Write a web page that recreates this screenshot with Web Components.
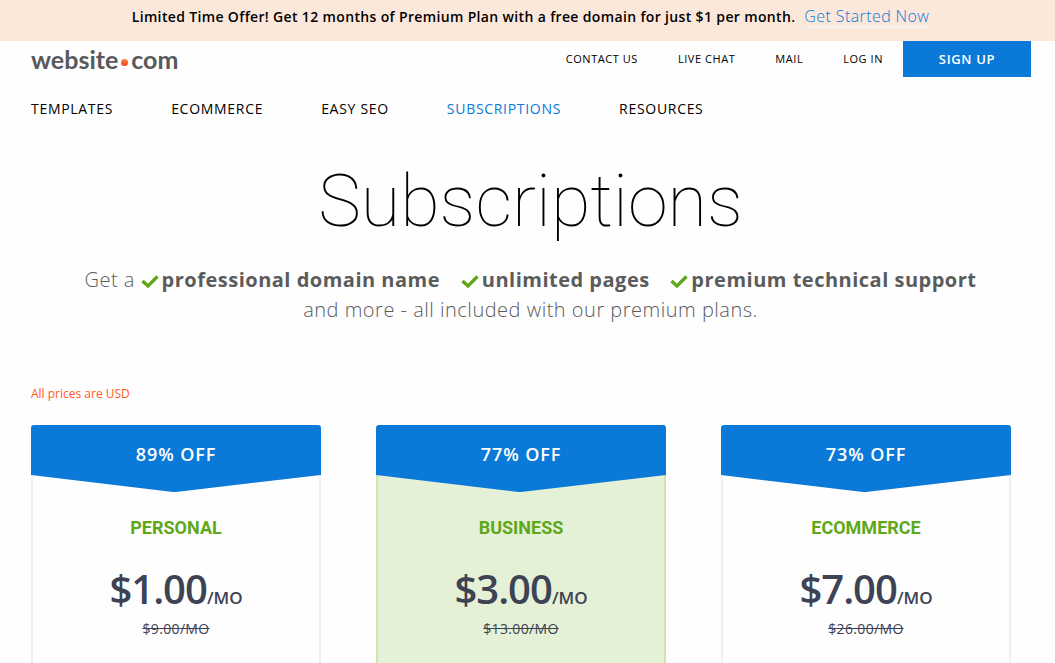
<!DOCTYPE html>
<html lang="en">
<head>
<meta charset="utf-8">
<meta name="viewport" content="width=device-width, initial-scale=1">
<title>Subscriptions | Website.com</title>
<style>
  html { background: #fefefe; scrollbar-width: none; }
  body {
    margin: 0;
    font-family: "Open Sans", "Noto Sans", sans-serif;
    color: #000;
    --blue: #0b79d8;
    --green: #5fa81a;
    --orange: #ff5a1f;
    --tracking: .025em;
    --tracking-wide: .05em;
  }
</style>
</head>
<body>
<subscription-page></subscription-page>

<script>
const define = (name, html) => customElements.define(name, class extends HTMLElement {
  constructor() {
    super();
    const template = document.createElement('template');
    template.innerHTML = html;
    this.attachShadow({ mode: 'open' }).append(template.content.cloneNode(true));
  }
});

define('offer-bar', `
  <style>
    :host { display: flex; justify-content: center; align-items: flex-start; gap: 9px;
      box-sizing: border-box; min-height: 41px; padding: 6px 24px 0 30px; background: #fbe8da; }
    strong, a { letter-spacing: var(--tracking); }
    strong { font-size: 14px; line-height: 22px; font-weight: 600; }
    a { font-size: 16px; line-height: 20px; font-weight: 300; color: var(--blue);
      text-decoration: none; border-bottom: 2px solid #f2f2f2; }
  </style>
  <strong>Limited Time Offer! Get 12 months of Premium Plan with a free domain for just $1 per month.</strong>
  <a href="#start">Get Started Now</a>
`);

define('site-logo', `
  <style>
    :host { display: block; }
    a { display: flex; align-items: center; gap: 3px; color: #58595b; text-decoration: none;
      font: 700 25px/36px Lato, sans-serif; }
    i { width: 7px; height: 7px; border-radius: 50%; background: linear-gradient(#f7873f, #f0441c); margin-top: 6px; }
  </style>
  <a href="#home"><span>website</span><i></i><span>com</span></a>
`);

define('nav-link', `
  <style>
    :host { display: block; }
    a { color: inherit; text-decoration: none; }
  </style>
  <a href="#"><slot></slot></a>
`);

define('site-header', `
  <style>
    :host { display: block; padding: 0 24px 0 31px; }
    .top { display: flex; justify-content: space-between; }
    .tools { display: flex; gap: 40px; font-size: 11px; line-height: 36px; letter-spacing: var(--tracking-wide); }
    .right { display: flex; gap: 20px; }
    button { width: 128px; height: 36px; border: 0; padding: 0; background: var(--blue); color: #fff;
      font: 600 13px/36px "Open Sans", sans-serif; letter-spacing: var(--tracking-wide); cursor: pointer; }
    .main { display: flex; gap: 58px; padding-top: 20px; font-size: 14px; line-height: 24px;
      letter-spacing: var(--tracking-wide); }
    .current { color: var(--blue); }
  </style>
  <div class="top">
    <site-logo></site-logo>
    <div class="right">
      <nav class="tools" aria-label="Account">
        <nav-link>CONTACT US</nav-link>
        <nav-link>LIVE CHAT</nav-link>
        <nav-link>MAIL</nav-link>
        <nav-link>LOG IN</nav-link>
      </nav>
      <button type="button">SIGN UP</button>
    </div>
  </div>
  <nav class="main" aria-label="Main">
    <nav-link>TEMPLATES</nav-link>
    <nav-link>ECOMMERCE</nav-link>
    <nav-link>EASY SEO</nav-link>
    <nav-link class="current">SUBSCRIPTIONS</nav-link>
    <nav-link>RESOURCES</nav-link>
  </nav>
`);

define('check-item', `
  <style>
    :host { display: inline; white-space: nowrap; }
    svg { width: 18px; height: 16px; vertical-align: -3px; margin-right: 3px; }
    path { fill: none; stroke: var(--green); stroke-width: 3.4; }
    strong { font-weight: 700; }
  </style>
  <svg viewBox="0 0 18 16" aria-hidden="true"><path d="M1.500 7 L7 12 L16.500 2.500"/></svg><strong><slot></slot></strong>
`);

define('page-intro', `
  <style>
    :host { display: block; padding: 41px 24px 0 30px; text-align: center; }
    h1 { margin: 0; font: 100 72px/80px Roboto, sans-serif; }
    p { margin: 23px 0 0; font-size: 20px; line-height: 30px; font-weight: 300; color: #5b5b5b;
      letter-spacing: var(--tracking); }
    check-item + check-item { margin-left: 15px; }
  </style>
  <h1>Subscriptions</h1>
  <p>Get a <check-item>professional domain name</check-item>
    <check-item>unlimited pages</check-item>
    <check-item>premium technical support</check-item><br>
    and more - all included with our premium plans.</p>
`);

define('plan-card', `
  <style>
    :host { display: block; box-sizing: border-box; text-align: center;
      --body: #fefefe; --edge: #eeeef5; }
    :host([featured]) { --body: #e5f1d6; --edge: #cde6ae; }
    .ribbon { position: relative; height: 67px; background: var(--blue); color: #fff; border-radius: 3px 3px 0 0;
      font-size: 18px; line-height: 58px; font-weight: 600; letter-spacing: var(--tracking-wide);
      clip-path: polygon(0 0, 100% 0, 100% 50px, 50% 100%, 49% 100%, 0 50px); }
    article { color: #3d4254; border: 2px solid var(--edge); border-top: 0; background: var(--body);
      margin-top: -17px; padding: 41px 0; }
    h2 { margin: 0; font: 700 18px/24px Roboto, sans-serif; color: var(--green); }
    .price { margin: 21px 0 0; font-size: 17px; line-height: 56px; font-weight: 600; }
    .price b { font-size: 40px; font-weight: 600; letter-spacing: -1px; }
    .old { margin: -8px 0 0; font-size: 14px; line-height: 22px; letter-spacing: var(--tracking); }
  </style>
  <div class="ribbon"><slot name="discount"></slot></div>
  <article>
    <h2><slot name="name"></slot></h2>
    <p class="price"><b><slot name="price"></slot></b><span>/MO</span></p>
    <p class="old"><s><slot name="old"></slot>/MO</s></p>
  </article>
`);

define('plan-list', `
  <style>
    :host { display: block; padding: 57px 44px 0 31px; }
    p { margin: 0; font-size: 12px; line-height: 24px; color: var(--orange); }
    .plans { display: grid; grid-template-columns: repeat(3, 1fr); gap: 55px; padding-top: 19px; }
  </style>
  <p>All prices are USD</p>
  <div class="plans">
    <plan-card><span slot="discount">89% OFF</span><span slot="name">PERSONAL</span><span slot="price">$1.00</span><span slot="old">$9.00</span></plan-card>
    <plan-card featured><span slot="discount">77% OFF</span><span slot="name">BUSINESS</span><span slot="price">$3.00</span><span slot="old">$13.00</span></plan-card>
    <plan-card><span slot="discount">73% OFF</span><span slot="name">ECOMMERCE</span><span slot="price">$7.00</span><span slot="old">$26.00</span></plan-card>
  </div>
`);

define('subscription-page', `
  <style>:host { display: block; }</style>
  <offer-bar></offer-bar>
  <site-header></site-header>
  <main>
    <page-intro></page-intro>
    <plan-list></plan-list>
  </main>
`);
</script>
</body>
</html>
